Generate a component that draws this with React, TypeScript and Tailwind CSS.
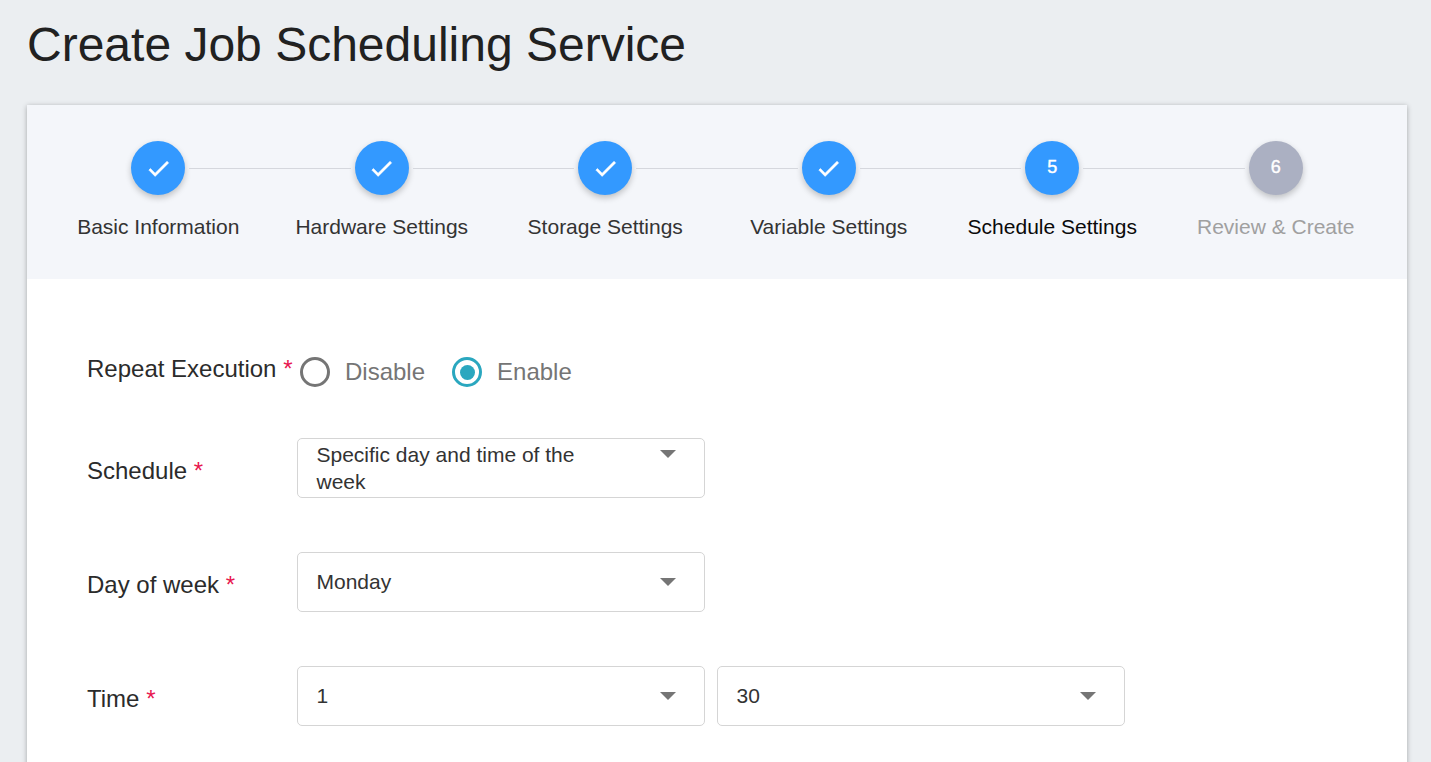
import React from "react";

const steps = ["Basic Information", "Hardware Settings", "Storage Settings", "Variable Settings", "Schedule Settings", "Review & Create"];

function Check() {
  return (
    <svg width="27" height="27" viewBox="0 0 24 24" fill="#fff" stroke="#fff" strokeWidth="0.5">
      <path d="M9 16.17L4.83 12l-1.42 1.41L9 19 21 7l-1.41-1.41z" />
    </svg>
  );
}

function Step({ i, label }: { i: number; label: string }) {
  const done = i < 4;
  const active = i === 4;
  return (
    <div className="relative flex flex-1 flex-col items-center">
      {i > 0 && <div className="absolute top-[27px] right-[calc(50%+31px)] left-[calc(-50%+31px)] h-px bg-[#d5d7dd]" />}
      <div className={`flex h-[54px] w-[54px] items-center justify-center rounded-full text-[18px] font-normal text-white shadow-[0_3px_6px_rgba(0,0,0,0.22)] ${i === 5 ? "bg-[#abb0c2]" : "bg-[#3399ff]"}`}>
        {done ? <Check /> : <span className="-mt-[2px] [-webkit-text-stroke:0.4px_white]">{i + 1}</span>}
      </div>
      <div className={`mt-[17px] text-[21px] leading-[30px] ${active ? "text-[#0a0a0a]" : i === 5 ? "text-[#a0a0a0]" : "text-[#333333]"}`}>
        {label}
      </div>
    </div>
  );
}

function Select({ text, wrap }: { text: string; wrap?: boolean }) {
  return (
    <div className="flex h-[60px] w-[408px] rounded-[5px] border border-[#d5d5d5] bg-white pl-[18.5px] pr-[28px]">
      {wrap ? (
        <div className="w-[280px] pt-[2px] text-[21px] leading-[27px] text-[#333333]">{text}</div>
      ) : (
        <div className="flex-1 pt-[14.5px] text-[21px] leading-[27px] text-[#333333]">{text}</div>
      )}
      <div className={`ml-auto ${wrap ? "mt-[11px]" : "mt-[25px]"} h-0 w-0 border-x-[8px] border-t-[8px] border-x-transparent border-t-[#757575]`} />
    </div>
  );
}

function Label({ text, className = "" }: { text: string; className?: string }) {
  return (
    <div className={`w-[210px] shrink-0 text-[24px] leading-[30px] text-[#2b2b2b] ${className}`}>
      {text} <span className="text-[#e8174f]">*</span>
    </div>
  );
}

function Radio({ on, text }: { on?: boolean; text: string }) {
  return (
    <div className="flex items-center">
      <div className={`flex h-[30px] w-[30px] items-center justify-center rounded-full border-[3px] ${on ? "border-[#2aa7bf]" : "border-[#757575]"}`}>
        {on && <div className="h-[15px] w-[15px] rounded-full bg-[#2aa7bf]" />}
      </div>
      <span className="ml-[15px] text-[24px] leading-[30px] text-[#757575]">{text}</span>
    </div>
  );
}

export default function App() {
  return (
    <div className="h-[762px] overflow-hidden bg-[#ebeef1] px-[27px] pr-[24px] font-['Liberation_Sans',Arial,sans-serif]">
      <h1 className="pt-[16px] text-[48px] font-normal leading-[58px] text-[#212121]">Create Job Scheduling Service</h1>
      <div className="mt-[31px] h-[800px] bg-white shadow-[0_1px_5px_rgba(0,0,0,0.3)]">
        <div className="flex h-[174px] bg-[#f4f6fa] px-[19.5px] pt-[36px]">
          {steps.map((s, i) => (
            <Step key={s} i={i} label={s} />
          ))}
        </div>
        <div className="flex flex-col pl-[60px]">
          <div className="mt-[76px] flex h-[32px] items-start">
            <Label text="Repeat Execution" className="-mt-[1px]" />
            <div className="mt-[2px] ml-[3px] flex gap-[27px]">
              <Radio text="Disable" />
              <Radio on text="Enable" />
            </div>
          </div>
          <div className="mt-[51px] flex items-center">
            <Label text="Schedule" className="mt-[5px]" />
            <Select text="Specific day and time of the week" wrap />
          </div>
          <div className="mt-[54px] flex items-center">
            <Label text="Day of week" className="mt-[5px]" />
            <Select text="Monday" />
          </div>
          <div className="mt-[54px] flex items-center gap-[12px]">
            <Label text="Time" className="mr-[-12px] mt-[5px]" />
            <Select text="1" />
            <Select text="30" />
          </div>
        </div>
      </div>
    </div>
  );
}
